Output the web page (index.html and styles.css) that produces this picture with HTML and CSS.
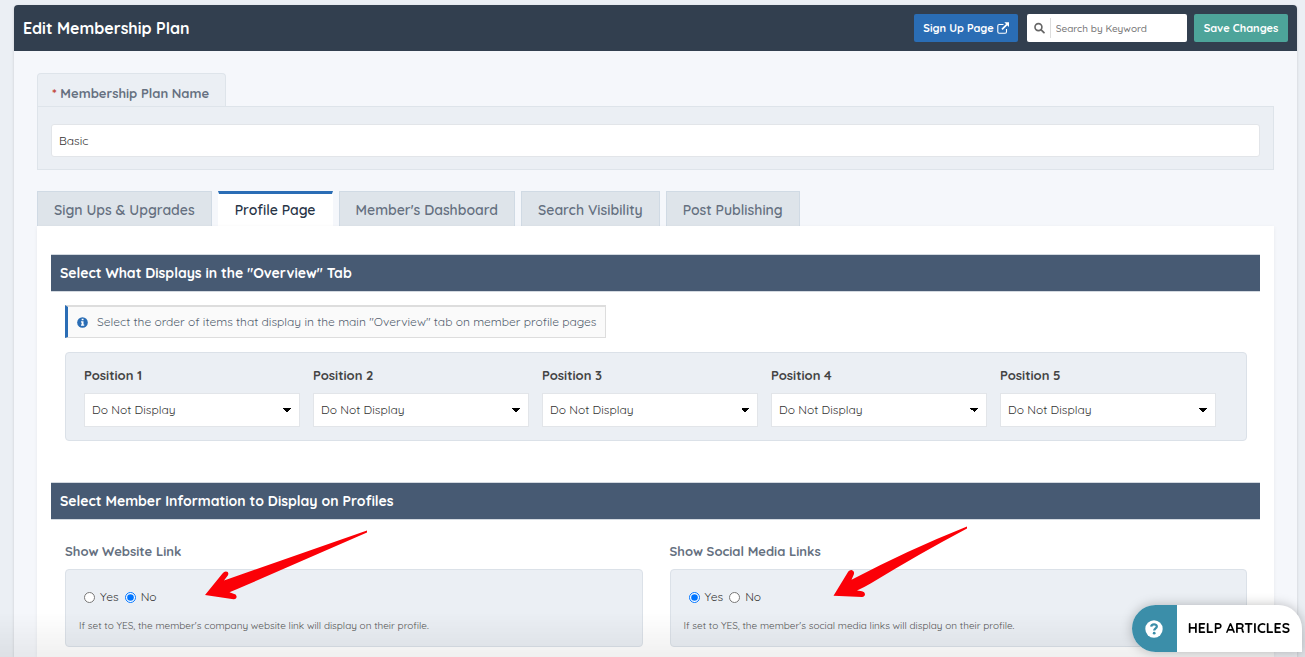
FILE: index.html
```html
<!DOCTYPE html>
<html lang="en">
<head>
<meta charset="utf-8">
<meta name="viewport" content="width=device-width, initial-scale=1">
<title>Edit Membership Plan</title>
<link rel="stylesheet" href="styles.css">
</head>
<body>
<div class="shell">
  <header class="topbar">
    <h1 class="topbar-title">Edit Membership Plan</h1>
    <a class="btn btn-blue" href="#signup">Sign Up Page
      <svg class="icon-ext" viewBox="0 0 12 12" aria-hidden="true"><path d="M6.500 2.500H2.200Q.8 2.500.8 3.900V9.800Q.8 11.200 2.200 11.200H8.100Q9.500 11.200 9.500 9.800V7" fill="none" stroke="#fff" stroke-width="1.100"/><path d="M5 7.300 10 2.300" stroke="#fff" stroke-width="1.700"/><path d="M7.300.300H12V5Z" fill="#fff"/></svg>
    </a>
    <label class="search">
      <svg class="icon-search" viewBox="0 0 12 12" aria-hidden="true"><circle cx="5" cy="5" r="3.900" fill="none" stroke="#666" stroke-width="1.800"/><path d="m8 8 3.200 3.200" stroke="#666" stroke-width="2" stroke-linecap="round"/></svg>
      <input class="search-input" type="search" placeholder="Search by Keyword" aria-label="Search by Keyword">
    </label>
    <button class="btn btn-green" type="button">Save Changes</button>
  </header>

  <main class="content">
    <div class="name-field">
      <label class="name-label" for="plan-name"><span class="required">*</span> Membership Plan Name</label>
      <div class="name-box"><input class="name-input" id="plan-name" type="text" value="Basic"></div>
    </div>

    <nav class="tabs">
      <a class="tab" href="#signups">Sign Ups &amp; Upgrades</a>
      <a class="tab tab-active" href="#profile" aria-current="page">Profile Page</a>
      <a class="tab" href="#dashboard">Member's Dashboard</a>
      <a class="tab" href="#search">Search Visibility</a>
      <a class="tab" href="#posts">Post Publishing</a>
    </nav>

    <div class="panel">
      <section class="section">
        <h2 class="section-title">Select What Displays in the "Overview" Tab</h2>
        <div class="section-body">
          <p class="info">
            <svg class="icon-info" viewBox="0 0 12 12" aria-hidden="true"><circle cx="6" cy="6" r="5.800" fill="#2a6db5"/><path d="M5.100 1.800h2v1.800h-2zM4.300 4.600h2.800v3.600h.8v1.300H4.300V8.200h.8V5.900h-.8z" fill="#fff"/></svg>
            <span>Select the order of items that display in the main "Overview" tab on member profile pages</span>
          </p>
          <div class="positions">
            <div class="position"><label class="position-label" for="p1">Position 1</label><select class="select" id="p1"><option>Do Not Display</option></select></div>
            <div class="position"><label class="position-label" for="p2">Position 2</label><select class="select" id="p2"><option>Do Not Display</option></select></div>
            <div class="position"><label class="position-label" for="p3">Position 3</label><select class="select" id="p3"><option>Do Not Display</option></select></div>
            <div class="position"><label class="position-label" for="p4">Position 4</label><select class="select" id="p4"><option>Do Not Display</option></select></div>
            <div class="position"><label class="position-label" for="p5">Position 5</label><select class="select" id="p5"><option>Do Not Display</option></select></div>
          </div>
        </div>
      </section>

      <section class="section">
        <h2 class="section-title">Select Member Information to Display on Profiles</h2>
        <div class="section-body options">
          <fieldset class="option">
            <legend class="option-title">Show Website Link</legend>
            <div class="option-box">
              <div class="radios">
                <label class="radio"><input class="radio-input" type="radio" name="website">Yes</label>
                <label class="radio"><input class="radio-input" type="radio" name="website" checked>No</label>
              </div>
              <p class="hint">If set to YES, the member's company website link will display on their profile.</p>
              <svg class="arrow arrow-website" viewBox="205 526 163 76" aria-hidden="true"><path d="M367 530.500 224 580.500 227.800 575.500Q229.500 571.800 226 571.600 224 571.500 222.500 573.500L205 595 233.500 599.300Q237 599.500 236.500 596 236.200 594.200 233.500 593.800L229.500 592.300Q238 588.800 246 585.300L367 532.500Z" fill="#fb0007"/></svg>
            </div>
          </fieldset>
          <fieldset class="option">
            <legend class="option-title">Show Social Media Links</legend>
            <div class="option-box">
              <div class="radios">
                <label class="radio"><input class="radio-input" type="radio" name="social" checked>Yes</label>
                <label class="radio"><input class="radio-input" type="radio" name="social">No</label>
              </div>
              <p class="hint">If set to YES, the member's social media links will display on their profile.</p>
              <svg class="arrow arrow-social" viewBox="833 526 135 76" aria-hidden="true"><path d="M967 526.500Q908 550 851.500 579.800L853.800 574.500Q855 571 851.500 570 849.700 569.800 848.300 571.500L833.500 595.800 862 597Q865 596.700 865 594 864.800 591.600 862 591.200L857 590.500Q864 587.500 871 583.300 918 554.500 967 528.500Z" fill="#fb0007"/></svg>
            </div>
          </fieldset>
        </div>
      </section>
    </div>
  </main>
</div>
<div class="fade"></div>
<a class="help" href="#help">
  <span class="help-icon"><svg class="icon-help" viewBox="0 0 18 18" aria-hidden="true"><circle cx="9" cy="9" r="8.700" fill="#fff"/><path d="M6.200 6.700C6.400 3.700 11.800 3.500 11.800 6.500 11.800 8.400 9.200 8.300 9.200 10.500" fill="none" stroke="#3b8ea9" stroke-width="2.300"/><circle cx="9.200" cy="13.200" r="1.400" fill="#3b8ea9"/></svg></span>
  <span class="help-text">HELP ARTICLES</span>
</a>
</body>
</html>
```

FILE: styles.css
```css
* { box-sizing: border-box; }

body {
  margin: 0;
  background: #ebeff4;
  color: #333;
  font: 400 12px/18px Quicksand, Lato, sans-serif;
}

h1, h2, p { margin: 0; }
input, select, button { font: inherit; color: inherit; }
a { text-decoration: none; }

.shell {
  display: flex;
  flex-direction: column;
  min-height: calc(100vh - 5px);
  margin: 5px 8px 0 14px;
  border-radius: 4px 4px 0 0;
  background: #f5f7fb;
  box-shadow: 0 1px 3px rgba(0, 0, 0, .15);
}

.topbar {
  display: flex;
  align-items: center;
  min-height: 46px;
  padding: 0 9px;
  border-radius: 4px 4px 0 0;
  background: #323f4f;
}
.topbar-title {
  margin-right: auto;
  color: #fff;
  font-size: 16px;
  line-height: 24px;
  font-weight: 700;
}

.btn {
  display: flex;
  align-items: center;
  justify-content: center;
  gap: 3px;
  height: 28px;
  padding: 0;
  border: 0;
  border-radius: 2px;
  color: #fff;
  font-size: 11px;
  font-weight: 700;
}
.btn-blue { width: 104px; margin-right: 9px; background: #2a6db5; }
.btn-green { width: 94px; margin-left: 7px; background: #4da49a; }
.icon-ext { width: 12px; height: 12px; }

.search {
  display: flex;
  align-items: center;
  width: 160px;
  height: 28px;
  padding-left: 7px;
  border-radius: 2px;
  background: #fff;
}
.icon-search { width: 12px; height: 12px; }
.search-input {
  width: 100%;
  height: 20px;
  min-width: 0;
  margin-left: 5px;
  padding: 0 5px;
  border: 0;
  border-left: 1px solid #ddd;
  outline: 0;
  background: none;
  font-size: 10px;
  font-weight: 500;
}
.search-input::placeholder { color: #757575; }

.content {
  display: flex;
  flex-direction: column;
  flex: 1;
  padding: 22px 23px 0;
}

.name-label {
  display: block;
  width: fit-content;
  padding: 10px 16px 4px 14px;
  border: 1px solid #dee4ea;
  border-bottom: 0;
  border-radius: 4px 4px 0 0;
  background: #ebeff4;
  color: #657080;
  font-size: 13px;
  font-weight: 700;
}
.required { color: #c0392b; line-height: 1; }
.name-box {
  padding: 17px 13px 12px;
  border: 1px solid #dee4ea;
  background: #ebeff4;
}
.name-input {
  display: block;
  width: 100%;
  height: 33px;
  padding: 0 7px;
  border: 1px solid #e2e5e9;
  border-radius: 3px;
  background: #fff;
}

.tabs {
  display: flex;
  gap: 6px;
  margin-top: 21px;
}
.tab {
  height: 35px;
  padding: 9px 16px 0;
  border: 1px solid #d0dae4;
  border-bottom: 0;
  background: #dee4ea;
  color: #657080;
  font-size: 14px;
  font-weight: 600;
}
.tab-active {
  padding-top: 7px;
  border-color: #fff;
  border-top: 3px solid #2a6db5;
  background: #fff;
  color: #273446;
}

.panel {
  flex: 1;
  padding: 28px 14px 10px;
  background: #fff;
  box-shadow: 0 1px 4px rgba(0, 0, 0, .06);
}
.section + .section { margin-top: 41px; }
.section-title {
  padding: 9px;
  border: 1px solid #d3d9e0;
  border-width: 1px 0;
  background: #475a73;
  background-clip: padding-box;
  color: #fff;
  font-size: 14px;
  line-height: 18px;
  font-weight: 700;
}
.section-body { padding: 13px 13px 0 14px; }

.info {
  display: flex;
  align-items: center;
  gap: 9px;
  width: fit-content;
  padding: 6px 9px;
  border: 1px solid #ddd;
  border-top-width: 2px;
  border-left: 3px solid #2a6db5;
  background: #fafafa;
  color: #525e6e;
}
.icon-info { width: 11px; height: 11px; }

.positions {
  display: grid;
  grid-template-columns: repeat(5, 1fr);
  gap: 13px;
  margin-top: 14px;
  padding: 13px 30px 13px 18px;
  border: 1px solid #dbe1e8;
  border-radius: 4px;
  background: #ebeff4;
}
.position-label {
  display: block;
  margin-bottom: 9px;
  color: #444;
  font-size: 13px;
  font-weight: 700;
}
.select {
  display: block;
  width: 100%;
  height: 34px;
  padding: 0 7px;
  border: 1px solid #e2e5e9;
  border-radius: 0;
  appearance: none;
  background: #fff conic-gradient(from 315deg at 50% 100%, #000 90deg, transparent 0) no-repeat right 8px top 14px / 8px 4px;
}

.options {
  display: grid;
  grid-template-columns: 1fr 1fr;
  gap: 27px;
  padding-top: 22px;
}
.option { min-width: 0; margin: 0; padding: 0; border: 0; }
.option-title {
  padding: 0;
  color: #657080;
  font-size: 13px;
  font-weight: 700;
}
.option-box {
  position: relative;
  margin-top: 9px;
  padding: 17px 13px 11px;
  border: 1px solid #dbe1e8;
  border-radius: 4px;
  background: #ebeff4;
}
.radios { display: flex; gap: 6px; padding-left: 5px; }
.radio { display: flex; align-items: center; gap: 5px; line-height: 20px; }
.radio-input { width: 11px; height: 11px; margin: 0; }
.hint { margin-top: 10px; color: #555; font-size: 10px; line-height: 18px; }

.arrow { position: absolute; top: -44px; height: 76px; }
.arrow-website { left: 139px; width: 163px; }
.arrow-social { left: 162px; width: 135px; }

.fade {
  position: fixed;
  right: 0;
  bottom: 0;
  left: 0;
  height: 45px;
  background: linear-gradient(transparent, rgba(0, 0, 0, .06));
  pointer-events: none;
}

.help {
  display: flex;
  position: fixed;
  right: 3px;
  bottom: 5px;
  height: 47px;
  border-radius: 24px 24px 0 24px;
  overflow: hidden;
  background: #fff;
  box-shadow: 0 0 12px rgba(0, 0, 0, .25);
  color: #000;
}
.help-icon {
  display: flex;
  align-items: center;
  justify-content: center;
  width: 45px;
  background: #3b8ea9;
}
.icon-help { width: 18px; height: 18px; }
.help-text {
  padding: 0 12px 0 11px;
  font-size: 14px;
  line-height: 47px;
  font-weight: 700;
}
```
